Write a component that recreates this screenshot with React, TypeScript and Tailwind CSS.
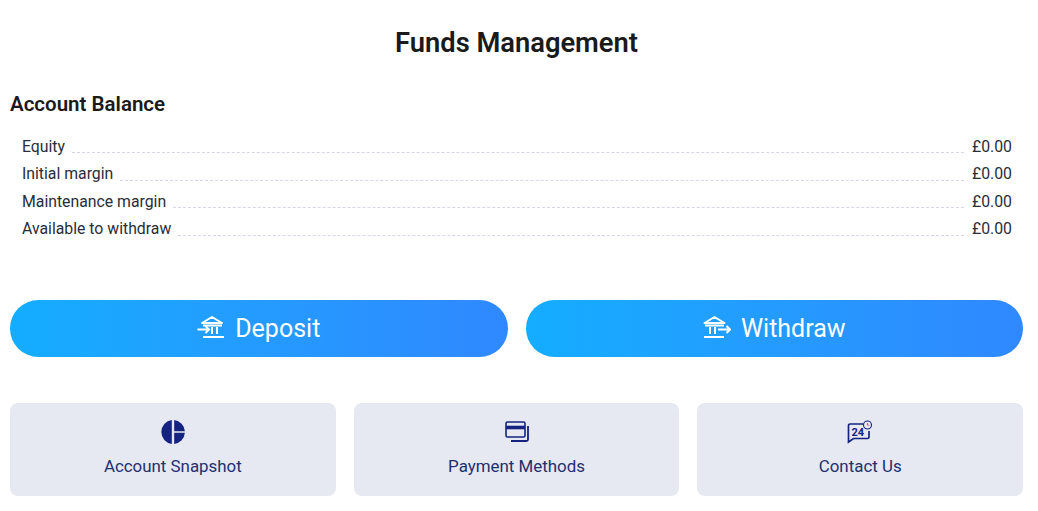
import type { ReactNode } from 'react';

const balances = [
  { label: 'Equity', value: '£0.00' },
  { label: 'Initial margin', value: '£0.00' },
  { label: 'Maintenance margin', value: '£0.00' },
  { label: 'Available to withdraw', value: '£0.00' },
];

function DepositIcon() {
  return (
    <svg width="28" height="24" viewBox="0 1 28 24" fill="none" stroke="white" strokeWidth="2">
      <path d="M5 8 L15 2 L25 8 Z" strokeLinejoin="round" />
      <path d="M6 10.5 H25 M15 12 V19 M20 12 V19" />
      <path d="M6 22 H27" />
      <path d="M0.5 14.5 H12 M8.5 11 L12 14.5 L8.5 18" />
    </svg>
  );
}

function WithdrawIcon() {
  return (
    <svg width="28" height="24" viewBox="0 1 28 24" fill="none" stroke="white" strokeWidth="2">
      <path d="M1.5 8 L11.5 2 L21.5 8 Z" strokeLinejoin="round" />
      <path d="M2 10.5 H21 M7 12 V19 M12 12 V19" />
      <path d="M1 22 H21" />
      <path d="M15 14.5 H27 M23.5 11 L27 14.5 L23.5 18" />
    </svg>
  );
}

function SnapshotIcon() {
  return (
    <svg width="24" height="24" viewBox="0 0 24 24">
      <path d="M10.8 0.1 A12 12 0 0 0 10.8 23.9 Z" fill="#14237f" />
      <path d="M13.2 0.1 A12 12 0 0 1 23.9 11.2 H13.2 Z" fill="#14237f" />
      <path d="M13.2 12.8 H23.9 A12 12 0 0 1 13.2 23.9 Z" fill="#14237f" />
    </svg>
  );
}

function CardIcon() {
  return (
    <svg width="24" height="22" viewBox="0 0 24 22" fill="none" stroke="#14237f">
      <rect x="1" y="1" width="19" height="15" rx="1.5" strokeWidth="1.6" />
      <path d="M1 6.5 H20" strokeWidth="3.6" />
      <path d="M23 5 V18.5 A1.5 1.5 0 0 1 21.5 20 H6" strokeWidth="1.8" />
    </svg>
  );
}

function ContactIcon() {
  return (
    <svg width="26" height="24" viewBox="0 0 26 24" fill="none">
      <path d="M16 4 H3 A1.5 1.5 0 0 0 1.5 5.5 V22 L6.5 18.5 H20.5 A1.5 1.5 0 0 0 22 17 V11" stroke="#14237f" strokeWidth="1.7" />
      <text x="4.5" y="15.5" fontSize="11" fontWeight="700" fill="#14237f" fontFamily="Roboto, sans-serif">24</text>
      <circle cx="20.5" cy="5" r="4" stroke="#14237f" strokeWidth="1.1" fill="#e6e8f2" />
      <path d="M20.5 3 V5.2 H22.2" stroke="#c2476a" strokeWidth="0.8" />
    </svg>
  );
}

function ActionButton({ icon, label }: { icon: ReactNode; label: string }) {
  return (
    <button className="flex h-[57.5px] flex-1 items-center justify-center gap-[10px] rounded-[29px] bg-gradient-to-r from-[#13adff] to-[#2f88ff] text-[25px] text-white">
      {icon}
      {label}
    </button>
  );
}

function Tile({ icon, label }: { icon: ReactNode; label: string }) {
  return (
    <div className="flex h-[93px] flex-1 flex-col items-center rounded-lg bg-[#e6e8f2] pt-[17px] text-[16.9px] text-[#22306e]">
      <div className="flex h-[24px] items-center justify-center">{icon}</div>
      <span className="mt-[10px] leading-[24px]">{label}</span>
    </div>
  );
}

export default function App() {
  return (
    <div className="h-[511px] w-[1038px] overflow-hidden bg-white pl-[10px] pr-[15px] pt-[26px] font-['Roboto',sans-serif] text-[#1a1a1a]">
      <h1 className="text-center text-[27.3px] font-semibold leading-[35px]">Funds Management</h1>

      <h2 className="mt-[28px] text-[20.5px] font-semibold leading-[30px]">Account Balance</h2>

      <div className="mt-[14px] pl-3 pr-[11px]">
        {balances.map((row) => (
          <div key={row.label} className="flex h-[27.5px] items-center text-[15.8px] text-[#2a2d3a]">
            <span>{row.label}</span>
            <span className="ml-[7px] mr-[8px] mt-[12px] flex-1 border-b border-dashed border-[#d5d8e4]" />
            <span>{row.value}</span>
          </div>
        ))}
      </div>

      <div className="mt-[56.5px] flex gap-[18px]">
        <ActionButton icon={<DepositIcon />} label="Deposit" />
        <ActionButton icon={<WithdrawIcon />} label="Withdraw" />
      </div>

      <div className="mt-[46px] flex gap-[18px]">
        <Tile icon={<SnapshotIcon />} label="Account Snapshot" />
        <Tile icon={<CardIcon />} label="Payment Methods" />
        <Tile icon={<ContactIcon />} label="Contact Us" />
      </div>
    </div>
  );
}
